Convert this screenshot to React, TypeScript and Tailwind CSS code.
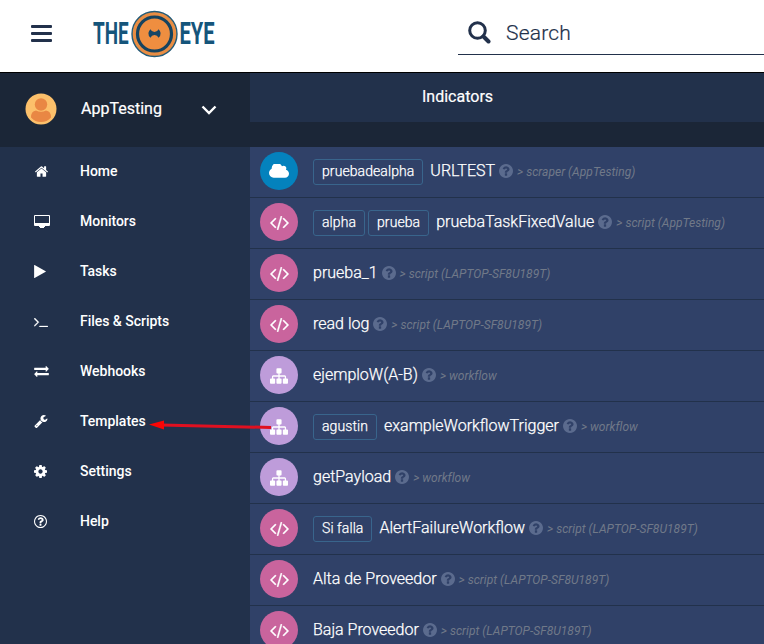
import React from "react";

type Glyph = { box: string; d: string };

const glyphs: Record<string, Glyph> = {
  home: {
    box: "89 250 1615 1286",
    d: "M1472 992v480q0 26-19 45t-45 19h-384v-384h-256v384h-384q-26 0-45-19t-19-45v-480q0-1 .5-3t.5-3l575-474 575 474q1 2 1 6zm223-69l-62 74q-8 9-21 11h-3q-13 0-21-7l-692-577-692 577q-12 8-24 7-13-2-21-11l-62-74q-8-10-7-23.5t11-21.5l719-599q32-26 76-26t76 26l244 204v-195q0-14 9-23t23-9h192q14 0 23 9t9 23v408l219 182q10 8 11 21.5t-7 23.5z",
  },
  monitor: {
    box: "0 0 16 13",
    d: "M1 0h14q1 0 1 1v9q0 1-1 1h-4v1h-1v1H6v-1H5v-1H1q-1 0-1-1V1q0-1 1-1zM1 1v7h14V1z",
  },
  play: {
    box: "192 118 1407 1556",
    d: "M1576 927l-1328 738q-23 13-39.500 3t-16.500-36v-1472q0-26 16.500-36t39.500 3l1328 738q23 13 23 31t-23 31z",
  },
  terminal: {
    box: "77 461 1651 1075",
    d: "M649 983l-466 466q-10 10-23 10t-23-10l-50-50q-10-10-10-23t10-23l393-393-393-393q-10-10-10-23t10-23l50-50q10-10 23-10t23 10l466 466q10 10 10 23t-10 23zm1079 457v64q0 14-9 23t-23 9h-960q-14 0-23-9t-9-23v-64q0-14 9-23t23-9h960q14 0 23 9t9 23z",
  },
  exchange: {
    box: "0 288 1792 1344",
    d: "M1792 1184v192q0 13-9.5 22.5t-22.5 9.5h-1376v192q0 13-9.5 22.5t-22.5 9.5q-12 0-24-10l-319-320q-9-9-9-22 0-14 9-23l320-320q9-9 23-9 13 0 22.5 9.5t9.5 22.5v192h1376q13 0 22.5 9.5t9.5 22.5zm0-544q0 14-9 23l-320 320q-9 9-23 9-13 0-22.5-9.5t-9.5-22.5v-192h-1376q-13 0-22.5-9.5t-9.5-22.5v-192q0-13 9.5-22.5t22.5-9.5h1376v-192q0-14 9-23t23-9q12 0 24 10l319 319q9 9 9 23z",
  },
  wrench: {
    box: "85 128 1641 1643",
    d: "M448 1472q0-26-19-45t-45-19-45 19-19 45 19 45 45 19 45-19 19-45zm644-420l-682 682q-37 37-90 37-52 0-91-37l-106-108q-38-36-38-90 0-53 38-91l681-681q39 98 114.5 173.5t173.5 114.5zm634-435q0 39-23 106-47 134-164.5 217.5t-258.5 83.5q-185 0-316.5-131.5t-131.5-316.5 131.5-316.5 316.5-131.5q58 0 121.5 16.5t107.5 46.5q16 11 16 28t-16 28l-293 169v224l193 107q5-3 79-48.5t135.5-81 70.5-35.5q15 0 23.5 10t8.5 25z",
  },
  cog: {
    box: "128 128 1536 1536",
    d: "M1152 896q0-106-75-181t-181-75-181 75-75 181 75 181 181 75 181-75 75-181zm512-109v222q0 12-8 23t-20 13l-185 28q-19 54-39 91 35 50 107 138 10 12 10 25t-9 23q-27 37-99 108t-94 71q-12 0-26-9l-138-108q-44 23-91 38-16 136-29 186-7 28-36 28h-222q-14 0-24.5-8.5t-11.5-21.5l-28-184q-49-16-90-37l-141 107q-10 9-25 9-14 0-25-11-126-114-165-168-7-10-7-23 0-12 8-23 15-21 51-66.5t54-70.5q-27-50-41-99l-183-27q-13-2-21-12.5t-8-23.5v-222q0-12 8-23t19-13l186-28q14-46 39-92-40-57-107-138-10-12-10-24 0-10 9-23 26-36 98.5-107.5t94.5-71.5q13 0 26 10l138 107q44-23 91-38 16-136 29-186 7-28 36-28h222q14 0 24.5 8.5t11.5 21.5l28 184q49 16 90 37l142-107q9-9 24-9 13 0 25 10 129 119 165 170 7 8 7 22 0 12-8 23-15 21-51 66.5t-54 70.5q26 50 41 98l183 28q13 2 21 12.5t8 23.5z",
  },
  helpOutline: {
    box: "128 128 1536 1536",
    d: "M1008 1200v160q0 14-9 23t-23 9h-160q-14 0-23-9t-9-23v-160q0-14 9-23t23-9h160q14 0 23 9t9 23zm256-496q0 50-15 90t-45.5 69-52 44-59.5 36q-32 18-46.5 28t-26 24-11.5 29v32q0 14-9 23t-23 9h-160q-14 0-23-9t-9-23v-68q0-35 10.5-64.5t24-47.5 39-35.5 41-25.5 44.5-21q53-25 75-43t22-49q0-42-43.5-71.5t-95.5-29.5q-56 0-95 27-29 20-80 83-9 12-25 12-11 0-19-6l-108-82q-10-7-12-20t5-23q122-192 349-192 129 0 238.5 89.500t109.500 214.500zm-368-448q-130 0-248.5 51t-204 136.5-136.5 204-51 248.5 51 248.5 136.5 204 204 136.5 248.5 51 248.5-51 204-136.5 136.5-204 51-248.5-51-248.5-136.5-204-204-136.5-248.5-51zm768 640q0 209-103 385.5t-279.5 279.5-385.5 103-385.5-103-279.5-279.5-103-385.5 103-385.5 279.5-279.5 385.5-103 385.5 103 279.5 279.5 103 385.5z",
  },
  help: {
    box: "128 128 1536 1536",
    d: "M1024 1376v-192q0-14-9-23t-23-9h-192q-14 0-23 9t-9 23v192q0 14 9 23t23 9h192q14 0 23-9t9-23zm256-672q0-88-55.5-163t-138.5-116-170-41q-243 0-371 213-15 24 8 42l132 100q7 6 19 6 16 0 25-12 53-68 86-92 34-24 86-24 48 0 85.5 26t37.5 59q0 38-20 61t-68 45q-63 28-115.5 86.5t-52.5 125.5v36q0 14 9 23t23 9h192q14 0 23-9t9-23q0-19 21.5-49.5t54.5-49.5q32-18 49-28.5t46-35 44.5-48 28-60.5 12.5-81zm384 192q0 209-103 385.5t-279.5 279.5-385.5 103-385.5-103-279.5-279.5-103-385.5 103-385.5 279.5-279.5 385.5-103 385.5 103 279.5 279.5 103 385.5z",
  },
  cloud: {
    box: "64 256 1920 1280",
    d: "M1984 1152q0 159-112.5 271.5t-271.5 112.5h-1088q-185 0-316.5-131.5t-131.5-316.5q0-132 71-241.5t187-163.5q-2-28-2-43 0-212 150-362t362-150q158 0 286.5 88t187.5 230q70-62 166-62 106 0 181 75t75 181q0 75-41 138 129 30 213 134.5t84 239.5z",
  },
  code: {
    box: "45 267 1830 1386",
    d: "M617 1399l-50 50q-10 10-23 10t-23-10l-466-466q-10-10-10-23t10-23l466-466q10-10 23-10t23 10l50 50q10 10 10 23t-10 23l-393 393 393 393q10 10 10 23t-10 23zm591-1067l-373 1291q-4 13-15.5 19.5t-23.5 2.5l-62-17q-13-4-19.5-15.5t-2.5-24.5l373-1291q4-13 15.5-19.5t23.5-2.5l62 17q13 4 19.5 15.5t2.5 24.5zm657 651l-466 466q-10 10-23 10t-23-10l-50-50q-10-10-10-23t10-23l393-393-393-393q-10-10-10-23t10-23l50-50q10-10 23-10t23 10l466 466q10 10 10 23t-10 23z",
  },
  sitemap: {
    box: "0 128 1792 1536",
    d: "M1792 1248v320q0 40-28 68t-68 28h-320q-40 0-68-28t-28-68v-320q0-40 28-68t68-28h96v-192h-512v192h96q40 0 68 28t28 68v320q0 40-28 68t-68 28h-320q-40 0-68-28t-28-68v-320q0-40 28-68t68-28h96v-192h-512v192h96q40 0 68 28t28 68v320q0 40-28 68t-68 28h-320q-40 0-68-28t-28-68v-320q0-40 28-68t68-28h96v-192q0-52 38-90t90-38h512v-192h-96q-40 0-68-28t-28-68v-320q0-40 28-68t68-28h320q40 0 68 28t28 68v320q0 40-28 68t-68 28h-96v192h512q52 0 90 38t38 90v192h96q40 0 68 28t28 68z",
  },
};

function Icon({ name, className }: { name: string; className: string }) {
  const g = glyphs[name];
  const bold = name === "code" || name === "terminal" ? 35 : 0;
  return (
    <svg viewBox={g.box} className={`shrink-0 ${className}`} fill="currentColor" fillRule="evenodd" stroke="currentColor" strokeWidth={bold} aria-hidden="true">
      <path d={g.d} />
    </svg>
  );
}

const nav = [
  { label: "Home", icon: "home", size: "ml-px h-[11px] w-[13px]" },
  { label: "Monitors", icon: "monitor", size: "h-[13px] w-4" },
  { label: "Tasks", icon: "play", size: "h-[13px] w-[12px]" },
  { label: "Files & Scripts", icon: "terminal", size: "mt-[2px] h-[9px] w-[14px]" },
  { label: "Webhooks", icon: "exchange", size: "h-[11px] w-[15px]" },
  { label: "Templates", icon: "wrench", size: "mt-px h-[13px] w-[14px]" },
  { label: "Settings", icon: "cog", size: "h-[13px] w-[13px]" },
  { label: "Help", icon: "helpOutline", size: "h-[13px] w-[13px]" },
];

type Kind = "cloud" | "code" | "sitemap";

const kinds: Record<Kind, { circle: string; icon: string }> = {
  cloud: { circle: "bg-[#0482bd]", icon: "h-[14px] w-[20px]" },
  code: { circle: "bg-[#c9649d]", icon: "mt-[2px] h-[14px] w-[19px]" },
  sitemap: { circle: "bg-[#be9cda]", icon: "mt-[2px] h-4 w-[18px]" },
};

const rows: { kind: Kind; tags: string[]; title: string; note: string }[] = [
  { kind: "cloud", tags: ["pruebadealpha"], title: "URLTEST", note: "> scraper (AppTesting)" },
  { kind: "code", tags: ["alpha", "prueba"], title: "pruebaTaskFixedValue", note: "> script (AppTesting)" },
  { kind: "code", tags: [], title: "prueba_1", note: "> script (LAPTOP-SF8U189T)" },
  { kind: "code", tags: [], title: "read log", note: "> script (LAPTOP-SF8U189T)" },
  { kind: "sitemap", tags: [], title: "ejemploW(A-B)", note: "> workflow" },
  { kind: "sitemap", tags: ["agustin"], title: "exampleWorkflowTrigger", note: "> workflow" },
  { kind: "sitemap", tags: [], title: "getPayload", note: "> workflow" },
  { kind: "code", tags: ["Si falla"], title: "AlertFailureWorkflow", note: "> script (LAPTOP-SF8U189T)" },
  { kind: "code", tags: [], title: "Alta de Proveedor", note: "> script (LAPTOP-SF8U189T)" },
  { kind: "code", tags: [], title: "Baja Proveedor", note: "> script (LAPTOP-SF8U189T)" },
];

function Logo() {
  return (
    <svg className="ml-[41px] h-12 w-[130px] overflow-visible" viewBox="0 0 130 48" role="img" aria-label="The Eye">
      <g fill="#15557b" fontFamily="Roboto, sans-serif" fontWeight="700" fontSize="31">
        <text transform="translate(0 34) scale(0.61 1)">THE</text>
        <text transform="translate(86.500 34) scale(0.65 1)">EYE</text>
      </g>
      <circle cx="61.500" cy="24" r="22.500" fill="#e98d43" stroke="#245b78" strokeWidth="1.400" />
      <circle cx="61.500" cy="24" r="17" fill="#ef8e40" stroke="#16435f" strokeWidth="3.200" />
      <path d="M57.500 19.300q1 2.700 4 2.700t4-2.700q4.500 4.200 0 8.400-1-2.700-4-2.700t-4 2.700q-4.500-4.200 0-8.400z" fill="#174666" />
    </svg>
  );
}

function Header() {
  return (
    <header className="flex h-[73px] w-full items-start border-b border-black bg-white">
      <div className="flex h-full w-[458px] shrink-0 items-start">
        <div className="ml-[31px] mt-[25px] flex w-[21px] flex-col gap-1">
          <span className="h-[3px] rounded-[1px] bg-[#22314b]" />
          <span className="h-[3px] rounded-[1px] bg-[#22314b]" />
          <span className="h-[3px] rounded-[1px] bg-[#22314b]" />
        </div>
        <div className="mt-[10px]">
          <Logo />
        </div>
      </div>
      <div className="flex h-[55px] flex-1 border-b border-[#22314b]">
        <svg className="ml-[10px] mt-[21px] size-[23px] shrink-0" viewBox="0 0 23 23" fill="none" stroke="#22314b" aria-hidden="true">
          <circle cx="9.500" cy="9.500" r="7.800" strokeWidth="3" />
          <path d="M15.500 15.500l5 5" strokeWidth="4" strokeLinecap="round" />
        </svg>
        <span className="ml-[15px] mt-[18px] text-[21px] font-light leading-[30px] tracking-[0.2px] text-[#22314b] [-webkit-text-stroke:0.2px_#22314b]">Search</span>
      </div>
    </header>
  );
}

function Sidebar() {
  return (
    <aside className="w-[250px] shrink-0 bg-[#22314b]">
      <div className="flex h-[74px] items-start bg-[#1b2637]">
        <svg className="ml-[25px] mt-[20px] size-[32px]" viewBox="0 0 32 32" aria-hidden="true">
          <circle cx="16" cy="16" r="15.500" fill="#fcc06b" />
          <circle cx="16" cy="11.500" r="6.200" fill="#e98744" />
          <path d="M6 24.500q0-6.500 5-7 5 2.700 10 0 5 .500 5 7-4 4.500-10 4.500t-10-4.500z" fill="#e98744" />
        </svg>
        <span className="ml-6 mt-[24px] w-[120px] text-[16px] leading-6 text-white [-webkit-text-stroke:0.2px_white]">AppTesting</span>
        <svg className="mt-[32px] h-[10px] w-[16px]" viewBox="0 0 16 10" fill="none" stroke="white" strokeWidth="2.400" aria-hidden="true">
          <path d="M1.500 1.500L8 8l6.500-6.500" />
        </svg>
      </div>
      <nav>
        {nav.map((item) => (
          <div key={item.label} className="flex h-[50px] items-center pb-[2px] text-white">
            <div className="ml-[34px] flex w-[46px] items-center">
              <Icon name={item.icon} className={item.size} />
            </div>
            <span className="text-[14px] font-medium leading-5 tracking-[-0.03px]">{item.label}</span>
          </div>
        ))}
      </nav>
    </aside>
  );
}

export default function App() {
  return (
    <div className="relative flex h-[644px] w-[764px] flex-col overflow-hidden bg-[#22314b] font-['Roboto',sans-serif]">
      <Header />
      <div className="flex min-h-0 flex-1">
        <Sidebar />
        <main className="min-w-0 flex-1 overflow-hidden bg-[#304168]">
          <div className="h-[49px] bg-[#22314b] pl-[172px] pt-[12px] text-[16px] leading-6 text-white [-webkit-text-stroke:0.2px_white]">Indicators</div>
          <div className="h-[25px] bg-[#1b2637]" />
          {rows.map((row) => (
            <div key={row.title} className="flex h-[51px] border-b border-[#22314b] pl-[10px] pt-[5px]">
              <div className={`flex size-[38px] shrink-0 items-center justify-center rounded-full text-white ${kinds[row.kind].circle}`}>
                <Icon name={row.kind} className={kinds[row.kind].icon} />
              </div>
              <div className="ml-[15px] flex h-[38px] items-center whitespace-nowrap">
                {row.tags.length > 0 && (
                  <div className="mr-[7px] mt-[2px] flex gap-[3px]">
                    {row.tags.map((tag) => (
                      <span key={tag} className="h-[26px] rounded-[3px] border border-[#39658c] px-2 text-[14px] font-light leading-[23px] tracking-[0.08px] text-white [-webkit-text-stroke:0.25px_white]">
                        {tag}
                      </span>
                    ))}
                  </div>
                )}
                <span className="text-[16px] font-light leading-6 text-white [-webkit-text-stroke:0.25px_white]">{row.title}</span>
                <Icon name="help" className="ml-1 size-[14px] text-[#5b6b8e]" />
                <span className="ml-1 mt-[2px] text-[12px] italic leading-4 tracking-[0.03px] text-[#707988]">{row.note}</span>
              </div>
            </div>
          ))}
        </main>
      </div>
      <svg className="absolute left-[149px] top-[418px] h-4 w-[124px]" viewBox="0 0 124 16" aria-hidden="true">
        <path d="M12 7l110 2.500" stroke="#e01020" strokeWidth="3" />
        <path d="M0 6.500L15 2.500v9z" fill="#fa0505" />
      </svg>
    </div>
  );
}
